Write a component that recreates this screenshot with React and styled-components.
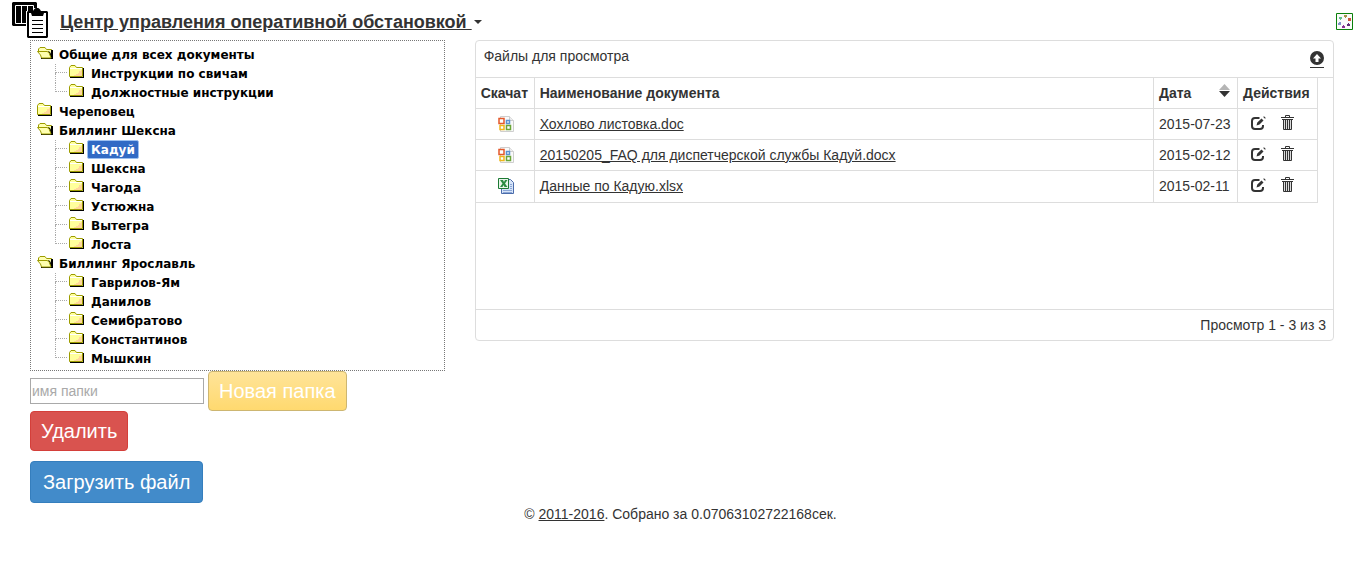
import React from "react";
import styled, { createGlobalStyle, css } from "styled-components";

const Global = createGlobalStyle`
  *, *::before, *::after { box-sizing: border-box; }
  body {
    margin: 0;
    background: #fff;
    color: #333;
    font: 14px/20px "Liberation Sans", Arial, sans-serif;
  }
  a { color: #333; text-decoration: underline; }
`;

const Header = styled.header`
  display: flex;
  justify-content: space-between;
  align-items: flex-start;
  height: 40px;
  padding: 1px 8px 0 11px;
`;
const Brand = styled.div`
  display: flex;
  align-items: flex-start;
  gap: 12px;
  svg { display: block; }
`;
const Title = styled.a`
  display: flex;
  align-items: center;
  gap: 2px;
  margin-top: 11px;
  font-size: 18px;
  font-weight: bold;
  line-height: 20px;
  text-decoration: none;
  span { text-decoration: underline; white-space: pre; }
`;
const Caret = styled.i`
  border: 4px solid transparent;
  border-top-color: #333;
  border-bottom: 0;
`;
const IconButton = styled.button`
  display: inline-flex;
  padding: 0;
  border: 0;
  background: none;
  color: #333;
  cursor: pointer;
`;
const Status = styled(IconButton)`
  margin-top: 12px;
`;

const Columns = styled.main`
  display: flex;
  align-items: flex-start;
  padding: 0 12px 0 15px;
`;
const Column = styled.section`
  flex: none;
  width: calc(100% * ${(p) => p.$span} / 3);
  padding: 0 15px;
`;

const Tree = styled.div`
  padding: 4px 6px 2px;
  border: 1px dotted #777;
  ul { margin: 0; padding: 0; list-style: none; }
`;
const Branch = styled.li`
  position: relative;
  ${(p) => p.$nested && css`
    padding-left: 32px;
    &::before {
      content: "";
      position: absolute;
      left: 18px;
      top: 0;
      width: 12px;
      height: 9px;
      border: dotted #aaa;
      border-width: 0 0 1px 1px;
    }
    &:not(:last-child)::after {
      content: "";
      position: absolute;
      left: 18px;
      top: 9px;
      bottom: 0;
      border-left: 1px dotted #aaa;
    }
  `}
`;
const Node = styled.div`
  display: flex;
  align-items: center;
  gap: 2px;
  height: 19px;
  svg { flex: none; }
`;
const NodeName = styled.button`
  height: 19px;
  padding: 1px 3px 0;
  border: 1px solid ${(p) => (p.$active ? "#9cc0f0" : "transparent")};
  border-radius: 2px;
  background: ${(p) => (p.$active ? "#316ac5" : "none")};
  color: ${(p) => (p.$active ? "#fff" : "#000")};
  font: bold 12px/16px "DejaVu Sans", Verdana, sans-serif;
  white-space: nowrap;
  cursor: pointer;
`;

const Controls = styled.div`
  display: flex;
  flex-direction: column;
  align-items: flex-start;
  gap: 10px;
`;
const FolderActions = styled.div`
  display: flex;
  flex-direction: column;
  align-items: flex-start;
`;
const FolderForm = styled.form`
  display: flex;
  flex-wrap: wrap;
  align-items: center;
  column-gap: 4px;
`;
const FolderInput = styled.input`
  width: 174px;
  height: 26px;
  padding: 1px;
  border: 1px solid #a9a9a9;
  color: #333;
  font: 14px/20px "Liberation Sans", Arial, sans-serif;
  &::placeholder { color: #a9a9a9; opacity: 1; }
`;
const tones = {
  warning: "border-color: #cdb671; background: linear-gradient(#ffe499, #ffd96f);",
  danger: "border-color: #d43f3a; background: #d9534f;",
  primary: "border-color: #357ebd; background: #428bca;",
};
const Button = styled.button`
  padding: ${(p) => (p.$large ? "6px 12px" : "5px 10px")};
  border: 1px solid;
  border-radius: 4px;
  color: #fff;
  font: 20px/28px "Liberation Sans", Arial, sans-serif;
  cursor: pointer;
  ${(p) => tones[p.$tone]}
`;

const Panel = styled.div`
  border: 1px solid #ddd;
  border-radius: 4px;
`;
const PanelHead = styled.div`
  display: flex;
  justify-content: space-between;
  height: 37px;
  padding: 5px 9px 0 8px;
  border-bottom: 1px solid #ddd;
`;
const UploadButton = styled(IconButton)`
  height: 17px;
  margin-top: 5px;
  border-bottom: 1px solid #333;
`;
const PanelBody = styled.div`
  min-height: 231px;
  padding-right: 15px;
`;
const Files = styled.table`
  width: 100%;
  table-layout: fixed;
  border-collapse: separate;
  border-spacing: 0;
`;
const cell = css`
  height: 31px;
  padding: 0 4px 0 5px;
  border: solid #ddd;
  border-width: 0 1px 1px 0;
  overflow: hidden;
  text-align: left;
  white-space: nowrap;
`;
const Th = styled.th`
  ${cell}
  width: ${(p) => p.$w || "auto"};
`;
const Td = styled.td`
  ${cell}
  tr:last-child > & { height: 32px; padding-bottom: 1px; }
  svg { display: block; }
`;
const FileType = styled.a`
  display: flex;
  justify-content: center;
  padding-left: 1px;
`;
const SortHead = styled.div`
  display: flex;
  justify-content: space-between;
  padding-right: 3px;
  svg { margin-top: 1px; }
`;
const Actions = styled.div`
  display: flex;
  align-items: center;
  gap: 15px;
  padding: 0 0 2px 8px;
`;
const PanelFoot = styled.div`
  padding: 5px 7px;
  border-top: 1px solid #ddd;
  text-align: right;
`;
const PageFoot = styled.footer`
  padding: 1px 0;
  text-align: center;
`;

const Logo = () => (
  <svg width="37" height="38" viewBox="0 0 37 38" aria-hidden="true">
    <path fill="#000" d="M2 1h23l1 1v22l-1 1H2l-1-1V2z" />
    <path fill="none" stroke="#fff" d="M4.500 22.500v-18h18v18zM10.500 4.500v18M16.500 4.500v18" />
    <path fill="#fff" d="M15 10h7V7h8v3h7v28H15z" />
    <path fill="#000" d="M17 10h5c1-1 1-3 4-3s3 2 4 3h6l1 1v25l-1 1H17l-1-1V11z" />
    <path fill="#fff" d="M18 12h2l1 3h11l1-3h2v23H18z" />
    <path stroke="#000" d="M21 19.500h11M21 23.500h11M21 27.500h11M21 31.500h11" />
  </svg>
);
const StatusIcon = () => (
  <svg width="17" height="17" viewBox="0 0 17 17" aria-hidden="true">
    <path fill="#fafafa" stroke="#0a800a" d="M.5.5h16v16H.5z" />
    <path fill="#a5944b" d="M8 2h3v2h-1v1H9V4H8z" />
    <path fill="#c9573b" d="M12 5h3v3h-3z" />
    <path fill="#63307a" d="M11 11h1v-1h1v1h1v2h-3z" />
    <path fill="#8b3494" d="M6 13h1v-1h1v1h1v2H6z" />
    <path fill="#8292c8" d="M2 10h1V9h2v3H2z" />
    <path fill="#65be8e" d="M3 4h3v2H5v1H4V6H3z" />
  </svg>
);
const FolderIcon = ({ open }) => (
  <svg width="16" height="17" viewBox="0 0 16 17" aria-hidden="true">
    {open ? (
      <>
        <path fill="#ffffb0" stroke="#9c9c00" d="M1.500 6V3l1.500-1.500h5l1.500 2h5V12" />
        <path fill="#000" d="M11 5l2 1 1 2V4h2v9H4v-1h9z" />
        <path fill="#ffffb0" stroke="#9c9c00" d="M.5 5.500H10l2 1 2 5.500H4.500L3.500 9z" />
      </>
    ) : (
      <>
        <path fill="#000" d="M1 12h13V3h1v10H1z" />
        <path fill="#ffff9c" stroke="#9c9c00" d="M.5 11.500V2.500l1.500-2h4l1.500 2h6v9z" />
        <path fill="#ffce9c" d="M12 5h1v6H5v-1h2V9h2V8h1V6h2z" opacity=".8" />
        <path stroke="#fff" d="M1 3.500h12" />
      </>
    )}
  </svg>
);
const OfficeIcon = () => (
  <svg width="16" height="16" viewBox="0 0 16 16" aria-hidden="true">
    <path fill="#fafafa" stroke="#cfcfcf" d="M2.500.5h9l4 4v11h-13z" />
    <path fill="#eee" stroke="#cfcfcf" d="M11.500.5v4h4" />
    <path fill="#fff" stroke="#e3582b" strokeWidth="1.500" d="M1 2.500h5v5H1z" />
    <path fill="#fff" stroke="#5b92d0" strokeWidth="1.500" d="M8.500 4.500h3v3h-3z" />
    <path fill="#fff" stroke="#efb71d" strokeWidth="1.500" d="M2 9.500h4v4H2z" />
    <path fill="#fff" stroke="#69a536" strokeWidth="1.500" d="M8.500 9.500h4v4h-4z" />
  </svg>
);
const ExcelIcon = () => (
  <svg width="16" height="16" viewBox="0 0 16 16" aria-hidden="true">
    <path fill="#d7e4f8" stroke="#4b6cab" d="M3.500 1.500h9l3 3v11h-12z" />
    <path stroke="#8aa6d6" d="M5 12.500h9M5 14.500h9M12 6.500h2M12 8.500h2M12 10.500h2" />
    <path fill="#e9f5ea" stroke="#1d7a34" d="M.5.5h10v10H.5z" />
    <path fill="#2b8c42" d="M2 2h3l1 2 1-2h2.500L7 5.500 9.500 9h-3L5.500 7l-1 2H2l2.500-3.500z" />
  </svg>
);
const EditIcon = () => (
  <svg width="15" height="14" viewBox="0 0 15 14" aria-hidden="true">
    <path fill="none" stroke="#333" strokeWidth="2" d="M8.500 2H4Q1 2 1 5v5q0 3 3 3h5q3 0 3-3V9" />
    <path fill="#333" d="M5.500 9.500l.8-3L10.500 2.500 12.500 4.500 8.500 8.500zM12.200 1l.8-.8 1.800 1.800-.8.800z" />
  </svg>
);
const TrashIcon = () => (
  <svg width="13" height="16" viewBox="0 0 13 16" aria-hidden="true">
    <path fill="#999" d="M3 5h7v10H3z" opacity=".35" />
    <path fill="none" stroke="#333" d="M4.500 2.500v-2h4v2M0 2.500h13M1 4.500h11M2.500 5v9.500h8V5M4.500 5v9M6.500 5v9M8.500 5v9" />
  </svg>
);
const UploadIcon = () => (
  <svg width="14" height="14" viewBox="0 0 14 14" aria-hidden="true">
    <circle cx="7" cy="7" r="7" fill="#333" />
    <path fill="#fff" d="M7 3l4 4.500H8.500V11h-3V7.500H3z" />
  </svg>
);
const SortIcon = () => (
  <svg width="11" height="13" viewBox="0 0 11 13" aria-hidden="true">
    <path fill="#b5b5b5" d="M5.500 0L11 6H0z" />
    <path fill="#333" d="M0 7h11l-5.500 6z" />
  </svg>
);

const folders = [
  { name: "Общие для всех документы", children: ["Инструкции по свичам", "Должностные инструкции"] },
  { name: "Череповец" },
  { name: "Биллинг Шексна", children: ["Кадуй", "Шексна", "Чагода", "Устюжна", "Вытегра", "Лоста"] },
  { name: "Биллинг Ярославль", children: ["Гаврилов-Ям", "Данилов", "Семибратово", "Константинов", "Мышкин"] },
];
const files = [
  { name: "Хохлово листовка.doc", date: "2015-07-23", Icon: OfficeIcon },
  { name: "20150205_FAQ для диспетчерской службы Кадуй.docx", date: "2015-02-12", Icon: OfficeIcon },
  { name: "Данные по Кадую.xlsx", date: "2015-02-11", Icon: ExcelIcon },
];

export default function App() {
  const [selected, setSelected] = React.useState("Кадуй");
  const node = (name, open) => (
    <Node>
      <FolderIcon open={open} />
      <NodeName type="button" $active={selected === name} onClick={() => setSelected(name)}>
        {name}
      </NodeName>
    </Node>
  );
  return (
    <>
      <Global />
      <Header>
        <Brand>
          <Logo />
          <Title href="#"><span>{"Центр управления оперативной обстановкой "}</span><Caret /></Title>
        </Brand>
        <Status type="button" aria-label="Статус"><StatusIcon /></Status>
      </Header>
      <Columns>
        <Column $span={1}>
          <Tree>
            <ul>
              {folders.map((f) => (
                <Branch key={f.name}>
                  {node(f.name, Boolean(f.children))}
                  {f.children && (
                    <ul>
                      {f.children.map((c) => <Branch $nested key={c}>{node(c, false)}</Branch>)}
                    </ul>
                  )}
                </Branch>
              ))}
            </ul>
          </Tree>
          <Controls>
            <FolderActions>
              <FolderForm onSubmit={(e) => e.preventDefault()}>
                <FolderInput aria-label="имя папки" placeholder="имя папки" />
                <Button $tone="warning">Новая папка</Button>
              </FolderForm>
              <Button type="button" $tone="danger">Удалить</Button>
            </FolderActions>
            <Button type="button" $tone="primary" $large>Загрузить файл</Button>
          </Controls>
        </Column>
        <Column $span={2}>
          <Panel>
            <PanelHead>
              Файлы для просмотра
              <UploadButton type="button" aria-label="Свернуть"><UploadIcon /></UploadButton>
            </PanelHead>
            <PanelBody>
              <Files>
                <thead>
                  <tr>
                    <Th $w="59px">Скачат</Th>
                    <Th>Наименование документа</Th>
                    <Th $w="84px"><SortHead>Дата<SortIcon /></SortHead></Th>
                    <Th $w="80px">Действия</Th>
                  </tr>
                </thead>
                <tbody>
                  {files.map(({ name, date, Icon }) => (
                    <tr key={name}>
                      <Td><FileType href="#" aria-label={name}><Icon /></FileType></Td>
                      <Td><a href="#">{name}</a></Td>
                      <Td>{date}</Td>
                      <Td>
                        <Actions>
                          <IconButton type="button" aria-label="Изменить"><EditIcon /></IconButton>
                          <IconButton type="button" aria-label="Удалить"><TrashIcon /></IconButton>
                        </Actions>
                      </Td>
                    </tr>
                  ))}
                </tbody>
              </Files>
            </PanelBody>
            <PanelFoot>Просмотр 1 - 3 из 3</PanelFoot>
          </Panel>
        </Column>
      </Columns>
      <PageFoot>© <a href="#">2011-2016</a>. Собрано за 0.07063102722168сек.</PageFoot>
    </>
  );
}
